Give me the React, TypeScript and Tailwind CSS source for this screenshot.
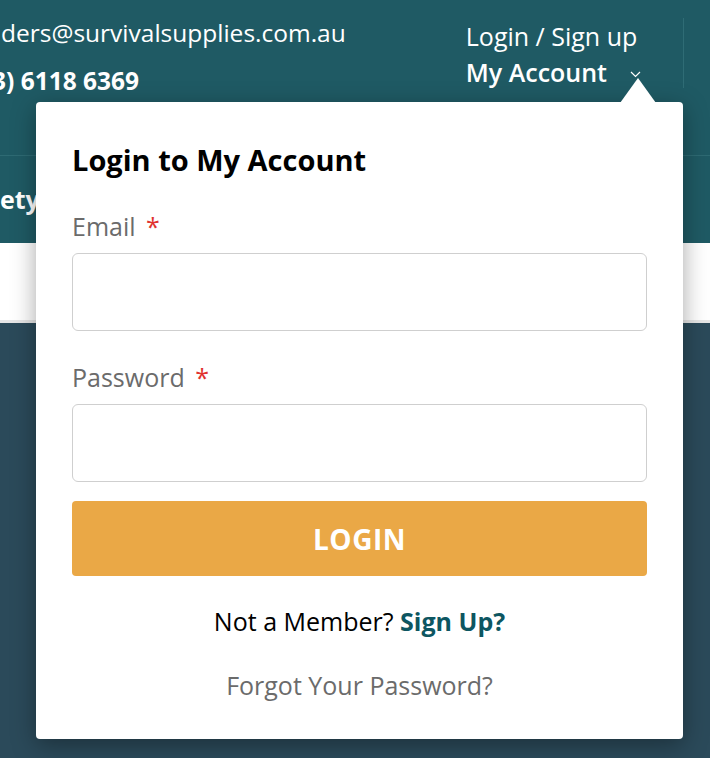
import React from "react";

const font = { fontFamily: '"Open Sans", "Noto Sans", sans-serif' };

function Field({ label }: { label: string }) {
  return (
    <div className="flex flex-col">
      <label className="text-[25px] leading-[34px] text-[#6b6b6b]">
        {label} <span className="text-[#e0322f] ml-1">*</span>
      </label>
      <input className="mt-[10px] h-[78px] w-full rounded-[6px] border border-[#cfcfcf] bg-white px-4 outline-none" />
    </div>
  );
}

export default function App() {
  return (
    <div className="relative h-[758px] w-[710px] overflow-hidden bg-[#2b4a5a]" style={font}>
      {/* top bar */}
      <div className="flex h-[155px] justify-between bg-[#1f5a64] text-white">
        <div className="flex flex-col pt-[16px]">
          <span className="text-[24.5px] leading-[34px] pl-[1px]">ders@survivalsupplies.com.au</span>
          <span className="-ml-[8px] mt-[14px] text-[24.5px] font-bold leading-[34px]">3) 6118 6369</span>
        </div>
        <div className="flex">
          <div className="flex flex-col pt-[19px] pr-[42px]">
            <span className="text-[25px] leading-[34px]">Login / Sign up</span>
            <span className="mt-[2px] flex items-center text-[25px] font-semibold leading-[34px]">
              My Account
              <svg className="ml-[23px] mt-[4px]" width="11" height="7" viewBox="0 0 11 7">
                <path d="M1 1l4.5 4.5L10 1" fill="none" stroke="white" strokeWidth="1.2" />
              </svg>
            </span>
          </div>
          <div className="mt-[18px] h-[70px] w-px bg-[#2f6c75]" />
          <div className="w-[26px]" />
        </div>
      </div>

      {/* nav bar */}
      <div className="flex h-[88px] items-center border-t border-[#2e6a73] bg-[#1f5a64]">
        <span className="text-[25px] font-bold text-white">ety</span>
      </div>

      {/* white strip */}
      <div className="h-[80px] border-b-[3px] border-[#e6e6e6] bg-white" />

      {/* dropdown */}
      <div className="absolute left-[36px] top-[102px] w-[647px] rounded-[4px] bg-white px-[36px] pb-[37px] pt-[39px] shadow-[0_6px_24px_rgba(0,0,0,0.35)]">
        <svg className="absolute right-[27px] -top-[24px]" width="36" height="25" viewBox="0 0 36 25">
          <path d="M0 25L18 0L36 25Z" fill="white" />
        </svg>
        <h2 className="text-[29px] font-bold leading-[38px] text-black">Login to My Account</h2>
        <div className="mt-[30px]">
          <Field label="Email" />
        </div>
        <div className="mt-[29px]">
          <Field label="Password" />
        </div>
        <button className="mt-[19px] h-[75px] w-full rounded-[4px] bg-[#eaa846] text-[28px] font-bold tracking-[0.5px] text-white">
          LOGIN
        </button>
        <p className="mt-[28px] text-center text-[25px] leading-[34px] text-black">
          Not a Member? <span className="font-bold text-[#0d5661]">Sign Up?</span>
        </p>
        <p className="mt-[30px] text-center text-[25px] leading-[34px] text-[#6b6b6b]">
          Forgot Your Password?
        </p>
      </div>
    </div>
  );
}
